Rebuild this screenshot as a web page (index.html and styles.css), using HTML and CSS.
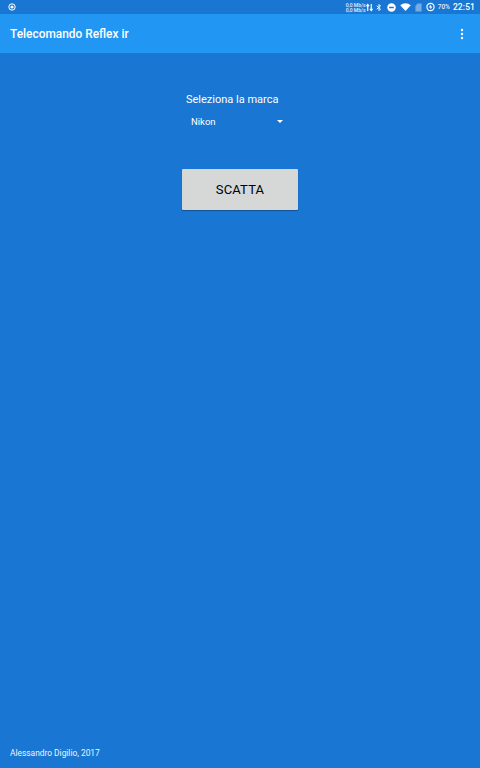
FILE: index.html
```
<!DOCTYPE html>
<html lang="it">
<head>
<meta charset="utf-8">
<title>Telecomando Reflex ir</title>
<link rel="stylesheet" href="styles.css">
</head>
<body>
<div class="screen">
  <div class="status">
    <svg class="ic-rec" viewBox="0 0 8 8" width="8" height="8"><circle cx="4" cy="4" r="3.200" fill="none" stroke="#fff" stroke-width="1"/><circle cx="4" cy="4" r="1.600" fill="#fff"/></svg>
    <div class="status-right">
      <div class="speed"><span>0,0 Mb/s</span><span>0,0 Mb/s</span></div>
      <svg class="ic" viewBox="0 0 8 10" width="7" height="9"><path d="M2 9V2M0.500 3.500L2 1.500L3.500 3.500M6 1v7M4.500 6.500L6 8.500L7.500 6.500" fill="none" stroke="#fff" stroke-width="1.300"/></svg>
      <svg class="ic bt" viewBox="0 0 8 10" width="6" height="9"><path d="M1 2.800L6 7L4 9V1L6 3L1 7.200" fill="none" stroke="#fff" stroke-width="1.200"/></svg>
      <svg class="ic dnd" viewBox="0 0 10 10" width="9" height="9"><circle cx="5" cy="5" r="4.700" fill="#fff"/><rect x="2.400" y="4.200" width="5.200" height="1.600" fill="#1976d2"/></svg>
      <svg class="ic wifi" viewBox="0 0 12 9" width="11" height="8"><path d="M0 2.500Q6 -2 12 2.500L6 9Z" fill="#fff"/></svg>
      <svg class="ic sim" viewBox="0 0 8 10" width="7" height="9"><path d="M0.500 9.500V3L3 0.500H7.500V9.500Z" fill="#fff" fill-opacity=".4"/></svg>
      <svg class="ic batt" viewBox="0 0 10 10" width="9" height="10"><circle cx="5" cy="5" r="4" fill="none" stroke="#fff" stroke-width="1.300"/><path d="M5.500 2.200L3 5.500H5V8L7 4.500H5.500Z" fill="#fff"/></svg>
      <span class="pct">70%</span>
      <span class="clock">22:51</span>
    </div>
  </div>
  <header class="appbar">
    <h1 class="title">Telecomando Reflex ir</h1>
    <svg class="menu" viewBox="0 0 4 12" width="4" height="12"><circle cx="2" cy="2" r="1.200" fill="#fff"/><circle cx="2" cy="6" r="1.200" fill="#fff"/><circle cx="2" cy="10" r="1.200" fill="#fff"/></svg>
  </header>
  <main class="content">
    <div class="picker">
      <p class="label">Seleziona la marca</p>
      <div class="spinner"><span>Nikon</span><i class="arrow"></i></div>
    </div>
    <button class="shoot" type="button">SCATTA</button>
  </main>
  <footer class="credit">Alessandro Digilio, 2017</footer>
</div>
</body>
</html>
```
FILE: styles.css
```
* { box-sizing: border-box; }
html, body { margin: 0; padding: 0; height: 100%; }
body { font-family: Roboto, "Liberation Sans", sans-serif; }
.screen {
  width: 480px; height: 768px; background: #1976d2; color: #fff;
  display: flex; flex-direction: column; overflow: hidden;
}
.status {
  height: 14px; flex: none; display: flex; align-items: center;
  justify-content: space-between; padding: 0 5px 0 8px; background: #1976d2;
}
.status-right { display: flex; align-items: center; }
.speed {
  display: flex; flex-direction: column; font-size: 5px; line-height: 5px;
  font-weight: 500; color: #e3eefa; width: 20px; white-space: nowrap; padding-top: 1px;
}
.ic { display: block; }
.bt { margin-left: 3px; }
.dnd { margin-left: 5px; }
.wifi { margin-left: 4px; }
.sim { margin-left: 4px; }
.batt { margin-left: 4px; }
.pct { font-size: 6.500px; margin-left: 3px; font-weight: 500; color: #e3eefa; }
.clock { font-size: 8.500px; margin-left: 3px; font-weight: 500; letter-spacing: .1px; }
.appbar {
  height: 39px; flex: none; background: #2196f3; display: flex; align-items: center;
  justify-content: space-between; padding: 0 16px 0 10px;
}
.title { margin: 0; font-size: 11.900px; line-height: 14px; font-weight: 500; }
.menu { display: block; }
.content { flex: 1; display: flex; flex-direction: column; align-items: center; padding-top: 40px; }
.picker { width: 100px; margin-right: 10px; }
.label { margin: 0; padding-left: 1px; font-size: 11px; line-height: 14px; white-space: nowrap; }
.spinner {
  height: 16px; margin-top: 6px; display: flex; align-items: center;
  justify-content: space-between; padding: 0 2px 0 6px; font-size: 9.500px;
}
.arrow {
  width: 0; height: 0; display: block; border-left: 3px solid transparent;
  border-right: 3px solid transparent; border-top: 3px solid #fff;
}
.shoot {
  width: 116px; height: 41px; margin-top: 40px; border: 0; border-radius: 1px;
  background: #d6d7d7; color: #000; font: 400 13px/16px Roboto, "Liberation Sans", sans-serif;
  letter-spacing: .15px; box-shadow: 0 1px 1px rgba(0,0,0,.3);
}
.credit { flex: none; height: 20px; padding-left: 10px; font-size: 8.400px; line-height: 11px; color: #eef5fc; }
```
